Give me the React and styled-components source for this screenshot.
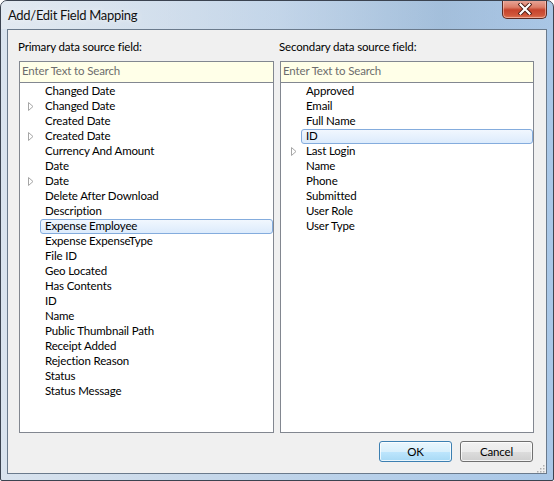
import React from "react";
import styled, { createGlobalStyle } from "styled-components";

const Global = createGlobalStyle`
  html, body { margin: 0; padding: 0; background: #fff; }
  body { font-family: Lato, "Noto Sans", sans-serif; }
`;

const Window = styled.div`
  box-sizing: border-box;
  width: 554px;
  height: 481px;
  display: flex;
  flex-direction: column;
  border: 1px solid #3b4350;
  border-radius: 7px 7px 2px 2px;
  background: linear-gradient(90deg, #d9e3ee 0%, #c7d8ea 35%, #b6cfe9 70%, #a9c7e7 100%);
  overflow: hidden;
`;

const TitleBar = styled.div`
  height: 28px;
  display: flex;
  align-items: flex-start;
  justify-content: space-between;
  background: linear-gradient(90deg, rgba(230,236,242,0.7) 0%, rgba(200,215,232,0.4) 50%, rgba(120,150,180,0.25) 80%, rgba(170,195,225,0.2) 100%);
`;

const Title = styled.div`
  font-family: Lato, "Noto Sans", sans-serif;
  font-size: 13px;
  letter-spacing: -0.3px;
  line-height: 18px;
  color: #111;
  padding: 5px 0 0 7px;
  text-shadow: 0 0 6px rgba(255,255,255,0.9);
`;

const CloseButton = styled.div`
  box-sizing: border-box;
  width: 45px;
  height: 19px;
  margin-right: 6px;
  margin-top: -1px;
  border: 1px solid #5b2a22;
  border-top: none;
  border-radius: 0 0 5px 5px;
  background: linear-gradient(180deg, #e9a99c 0%, #dc7d68 40%, #c6432c 55%, #d0573b 85%, #e07a5a 100%);
  box-shadow: inset 0 0 0 1px rgba(255,220,210,0.5);
  display: flex;
  align-items: center;
  justify-content: center;
`;

const Client = styled.div`
  flex: 1;
  margin: 0 6px 6px 6px;
  border: 1px solid #6a7a8c;
  background: #f0f0f0;
  display: flex;
  flex-direction: column;
  padding: 0 13px 0 11px;
`;

const Columns = styled.div`
  display: grid;
  grid-template-columns: 255px 254px;
  column-gap: 6px;
  padding-top: 9px;
`;

const Column = styled.div`
  display: flex;
  flex-direction: column;
`;

const textFont = `
  font-size: 11.5px;
  letter-spacing: -0.15px;
`;

const Label = styled.div`
  ${textFont}
  color: #000;
  height: 22px;
  line-height: 15px;
  margin-left: -1px;
`;

const Search = styled.div`
  ${textFont}
  box-sizing: border-box;
  height: 22px;
  border: 1px solid #828790;
  background: #ffffe8;
  color: #6d6d6d;
  line-height: 18px;
  padding-left: 2px;
`;

const List = styled.div`
  box-sizing: border-box;
  height: 350px;
  border: 1px solid #828790;
  border-top: none;
  background: #fff;
  padding-top: 1px;
  display: flex;
  flex-direction: column;
`;

const Row = styled.div`
  display: flex;
  height: 15px;
  align-items: stretch;
`;

const Expander = styled.div`
  width: 20px;
  display: flex;
  align-items: center;
  justify-content: flex-end;
  padding-right: ${p => p.$pr}px;
  box-sizing: border-box;
`;

const Item = styled.div`
  ${textFont}
  flex: 1;
  box-sizing: border-box;
  line-height: 12px;
  color: #000;
  padding-left: 4px;
  border: 1px solid ${p => (p.$selected ? "#84acdd" : "transparent")};
  border-radius: 3px;
  background: ${p => (p.$selected ? "linear-gradient(180deg, #f1f7fe 0%, #dcebfc 100%)" : "transparent")};
  white-space: nowrap;
`;

const Footer = styled.div`
  display: flex;
  justify-content: flex-end;
  gap: 8px;
  padding-top: 8px;
  position: relative;
  flex: 1;
`;

const Button = styled.div`
  ${textFont}
  box-sizing: border-box;
  width: 73px;
  height: 21px;
  border: 1px solid ${p => (p.$default ? "#3c7fb1" : "#707070")};
  border-radius: 3px;
  background: ${p =>
    p.$default
      ? "linear-gradient(180deg, #eaf6fd 0%, #d9f0fc 50%, #bee6fd 51%, #a7d9f5 100%)"
      : "linear-gradient(180deg, #f2f2f2 0%, #ebebeb 50%, #dddddd 51%, #cfcfcf 100%)"};
  box-shadow: inset 0 0 0 1px rgba(255,255,255,0.75);
  color: #000;
  display: flex;
  align-items: center;
  justify-content: center;
`;

const Grip = styled.svg`
  position: absolute;
  right: -12px;
  bottom: 0px;
`;

const primary = [
  ["Changed Date"],
  ["Changed Date", true],
  ["Created Date"],
  ["Created Date", true],
  ["Currency And Amount"],
  ["Date"],
  ["Date", true],
  ["Delete After Download"],
  ["Description"],
  ["Expense Employee", false, true],
  ["Expense ExpenseType"],
  ["File ID"],
  ["Geo Located"],
  ["Has Contents"],
  ["ID"],
  ["Name"],
  ["Public Thumbnail Path"],
  ["Receipt Added"],
  ["Rejection Reason"],
  ["Status"],
  ["Status Message"],
];

const secondary = [
  ["Approved"],
  ["Email"],
  ["Full Name"],
  ["ID", false, true],
  ["Last Login", true],
  ["Name"],
  ["Phone"],
  ["Submitted"],
  ["User Role"],
  ["User Type"],
];

const Triangle = () => (
  <svg width="6" height="9" viewBox="0 0 6 9">
    <path d="M0.5 0.5 L5 4.5 L0.5 8.5 Z" fill="#fff" stroke="#a6a6a6" strokeWidth="1" />
  </svg>
);

const FieldList = ({ items, pr }) => (
  <List>
    {items.map(([name, exp, sel], i) => (
      <Row key={i}>
        <Expander $pr={pr}>{exp ? <Triangle /> : null}</Expander>
        <Item $selected={sel}>{name}</Item>
      </Row>
    ))}
  </List>
);

export default function App() {
  return (
    <>
      <Global />
      <Window>
        <TitleBar>
          <Title>Add/Edit Field Mapping</Title>
          <CloseButton>
            <svg width="14" height="12" viewBox="0 0 14 12">
              <path d="M2.5 1.5 L11.5 10.5 M11.5 1.5 L2.5 10.5" stroke="#4a1a12" strokeWidth="4" strokeLinecap="square" />
              <path d="M2.5 1.5 L11.5 10.5 M11.5 1.5 L2.5 10.5" stroke="#fff" strokeWidth="2.2" strokeLinecap="square" />
            </svg>
          </CloseButton>
        </TitleBar>
        <Client>
          <Columns>
            <Column>
              <Label>Primary data source field:</Label>
              <Search>Enter Text to Search</Search>
              <FieldList items={primary} pr={6} />
            </Column>
            <Column>
              <Label>Secondary data source field:</Label>
              <Search>Enter Text to Search</Search>
              <FieldList items={secondary} pr={4} />
            </Column>
          </Columns>
          <Footer>
            <Button $default>OK</Button>
            <Button>Cancel</Button>
            <Grip width="10" height="10" viewBox="0 0 10 10">
              {[[8, 2], [5, 5], [8, 5], [2, 8], [5, 8], [8, 8]].map(([x, y], i) => (
                <rect key={i} x={x} y={y} width="1.5" height="1.5" fill="#b0b0b0" />
              ))}
            </Grip>
          </Footer>
        </Client>
      </Window>
    </>
  );
}
